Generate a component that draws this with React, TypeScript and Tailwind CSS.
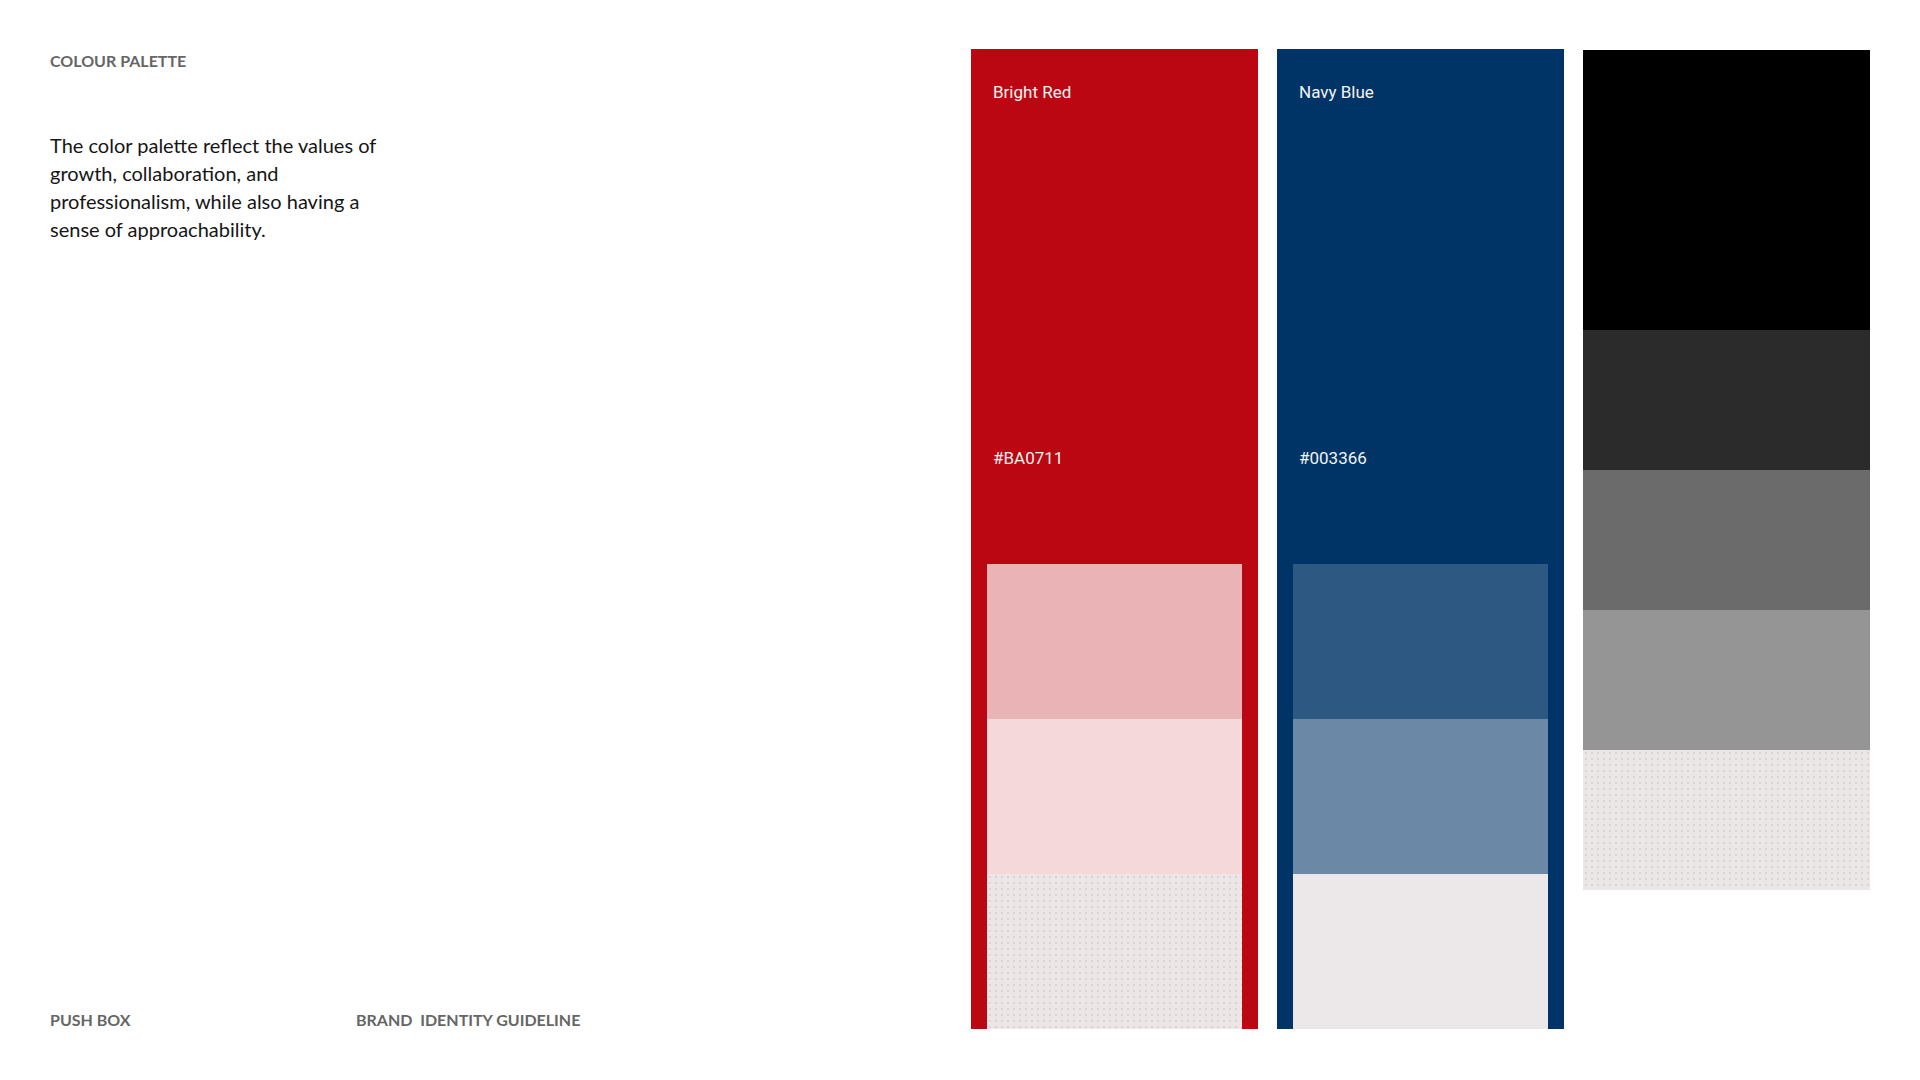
import React from 'react';

const dots =
  'bg-[image:radial-gradient(circle,_#d3cdce_0.6px,_transparent_1.1px)] bg-[length:6px_6px]';

type Swatch = { className: string };

const ColorColumn = ({
  name,
  hex,
  base,
  tints,
}: {
  name: string;
  hex: string;
  base: string;
  tints: Swatch[];
}) => {
  return (
    <div className={`w-[287px] h-[980px] flex flex-col ${base}`}>
      <div className="h-[515px] px-[22px] pt-[33px] flex flex-col text-[17px] leading-[20px] text-[#f3f3f3] font-['Roboto',sans-serif]">
        <span>{name}</span>
        <span className="mt-[346px]">{hex}</span>
      </div>
      <div className="flex-1 px-[16px] flex flex-col">
        {tints.map((t, i) => (
          <div key={i} className={`h-[155px] ${t.className}`} />
        ))}
      </div>
    </div>
  );
};

const App = () => {
  return (
    <div className="w-[1920px] h-[1080px] bg-white flex px-[50px] pt-[49px] font-['Lato',sans-serif]">
      {/* left text */}
      <div className="flex-1 h-[981px] flex flex-col justify-between">
        <div>
          <h1 className="mt-[2px] text-[16px] leading-[20px] font-bold text-[#666666]">COLOUR PALETTE</h1>
          <p className="mt-[60px] w-[345px] text-[20px] leading-[28px] text-[#161616]">
            The color palette reflect the values of growth, collaboration, and professionalism, while also having a
            sense of approachability.
          </p>
        </div>
        <div className="flex text-[16px] leading-[20px] font-bold text-[#666666]">
          <span className="w-[306px]">PUSH BOX</span>
          <span className="whitespace-pre">{'BRAND  IDENTITY GUIDELINE'}</span>
        </div>
      </div>

      {/* swatches */}
      <div className="flex gap-[19px]">
        <ColorColumn
          name="Bright Red"
          hex="#BA0711"
          base="bg-[#BA0711]"
          tints={[
            { className: 'bg-[#EAB3B5]' },
            { className: 'bg-[#F5D8DA]' },
            { className: `bg-[#EDE6E7] ${dots}` },
          ]}
        />
        <ColorColumn
          name="Navy Blue"
          hex="#003366"
          base="bg-[#003366]"
          tints={[
            { className: 'bg-[#2C5882]' },
            { className: 'bg-[#6B88A6]' },
            { className: 'bg-[#ECE8E9]' },
          ]}
        />
        <div className="w-[287px] mt-[1px] flex flex-col">
          <div className="h-[280px] bg-black" />
          <div className="h-[140px] bg-[#2B2B2B]" />
          <div className="h-[140px] bg-[#6B6B6B]" />
          <div className="h-[140px] bg-[#959595]" />
          <div className={`h-[140px] bg-[#EBE7E7] ${dots}`} />
        </div>
      </div>
    </div>
  );
};

export default App;
